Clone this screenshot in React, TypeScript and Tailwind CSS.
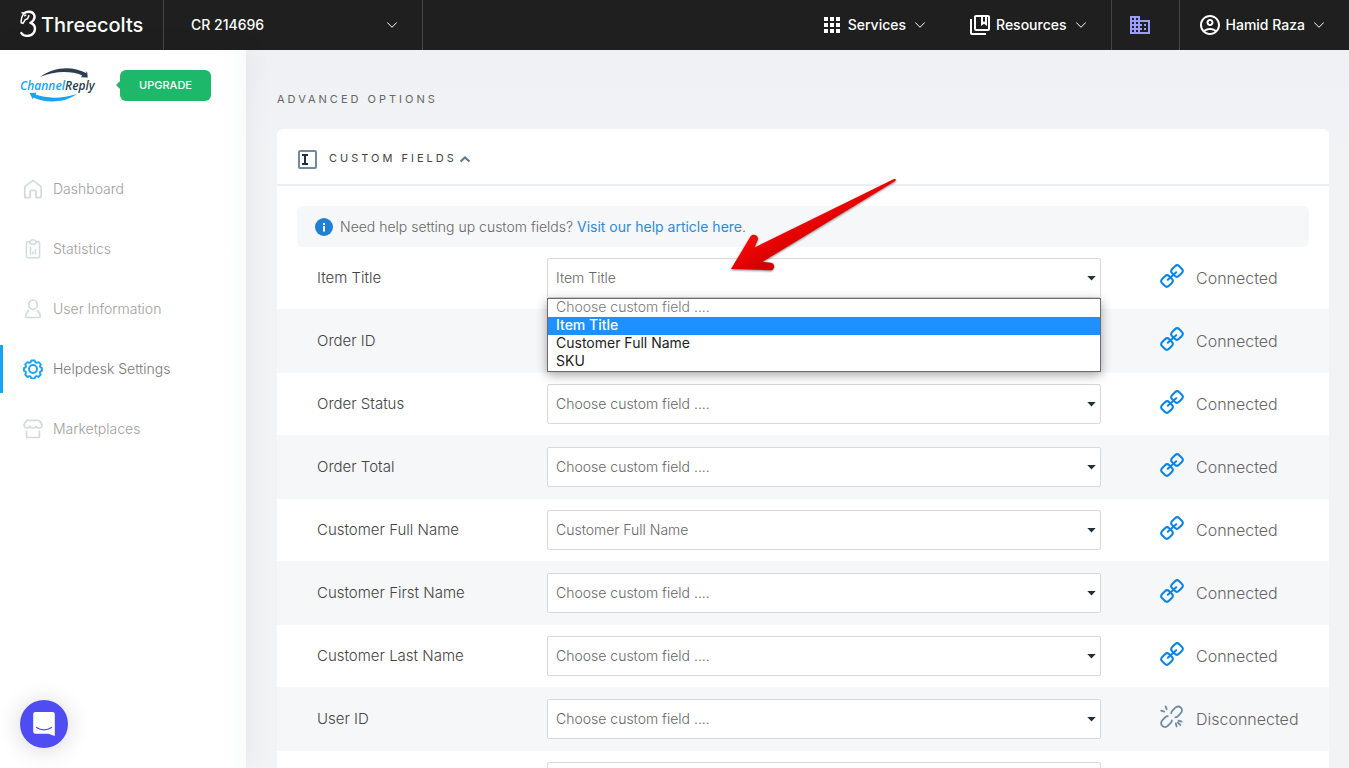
import { useState, type ReactNode } from "react";
import {
  MdApps,
  MdDomain,
  MdOutlineAccountCircle,
  MdOutlineCollectionsBookmark,
} from "react-icons/md";
import { BsChevronDown } from "react-icons/bs";

const PLACEHOLDER = "Choose custom field ....";
const OPTIONS = [PLACEHOLDER, "Item Title", "Customer Full Name", "SKU"];

type Field = { id: string; label: string; value: string; connected: boolean };

const FIELDS: Field[] = [
  { id: "item-title", label: "Item Title", value: "Item Title", connected: true },
  { id: "order-id", label: "Order ID", value: PLACEHOLDER, connected: true },
  { id: "order-status", label: "Order Status", value: PLACEHOLDER, connected: true },
  { id: "order-total", label: "Order Total", value: PLACEHOLDER, connected: true },
  { id: "full-name", label: "Customer Full Name", value: "Customer Full Name", connected: true },
  { id: "first-name", label: "Customer First Name", value: PLACEHOLDER, connected: true },
  { id: "last-name", label: "Customer Last Name", value: PLACEHOLDER, connected: true },
  { id: "user-id", label: "User ID", value: PLACEHOLDER, connected: false },
];

const NAV: { label: string; icon: ReactNode; active?: boolean }[] = [
  { label: "Dashboard", icon: <HomeIcon /> },
  { label: "Statistics", icon: <StatsIcon /> },
  { label: "User Information", icon: <UserIcon /> },
  { label: "Helpdesk Settings", icon: <GearIcon />, active: true },
  { label: "Marketplaces", icon: <ShopIcon /> },
];

function HomeIcon() {
  return (
    <svg width="20" height="20" viewBox="0 0 20 20" fill="none" stroke="currentColor" strokeWidth="1.800" strokeLinejoin="round">
      <path d="M1.800 7.600 10 1.400l8.200 6.200v10.200a.9.9 0 0 1-.9.9h-3.700a.7.7 0 0 1-.7-.7v-5.200a1.400 1.400 0 0 0-1.400-1.400h-3a1.400 1.400 0 0 0-1.400 1.400v5.200a.7.7 0 0 1-.7.700H2.700a.9.9 0 0 1-.9-.9z" />
    </svg>
  );
}

function StatsIcon() {
  return (
    <svg width="20" height="20" viewBox="0 0 20 20" fill="none" stroke="currentColor" strokeWidth="1.500" strokeLinejoin="round" strokeLinecap="round">
      <path d="M6.500 2.800H5A1.600 1.600 0 0 0 3.400 4.400v12.800A1.600 1.600 0 0 0 5 18.800h10a1.600 1.600 0 0 0 1.600-1.600V4.400A1.600 1.600 0 0 0 15 2.800h-1.500" />
      <path d="M7 2.400 8.500 1h3L13 2.400v1.400l-1.300 1.400H8.300L7 3.800z" />
      <path d="M7.500 8v7M10 13v2M12.500 10.500V15" />
    </svg>
  );
}

function UserIcon() {
  return (
    <svg width="20" height="20" viewBox="0 0 20 20" fill="none" stroke="currentColor" strokeWidth="1.700" strokeLinejoin="round">
      <ellipse cx="10" cy="5.700" rx="4.300" ry="4.700" />
      <path d="M6.200 11.300C4.300 12.300 3 14.800 2.600 17.200c-.1.700.3 1.300 1 1.300h12.800c.7 0 1.100-.6 1-1.300-.4-2.400-1.700-4.900-3.600-5.900" />
    </svg>
  );
}

function GearIcon() {
  return (
    <svg width="20" height="20" viewBox="0 0 20 20" fill="none" stroke="currentColor" strokeWidth="1.900" strokeLinejoin="round">
      <path d="M8.300 1.500h3.400l.7 1.900 1.200.5 1.900-.8 2.300 2.300-.8 1.900.4 1.100 1.500.6v2.800l-1.600.8-.4 1.200.8 1.900-2.300 2.300-1.800-.8-1.200.5-.7 1.800H8.300l-.7-1.800-1.200-.5-1.900.8-2.300-2.300.8-1.900-.4-1.200-1.600-.8V9l1.600-.6.4-1.100-.8-1.900 2.300-2.300 1.900.8 1.200-.5z" />
      <circle cx="10" cy="10" r="4" />
    </svg>
  );
}

function ShopIcon() {
  return (
    <svg width="20" height="20" viewBox="0 0 20 20" fill="none" stroke="currentColor" strokeWidth="1.700" strokeLinejoin="round">
      <path d="M4.600 1.300h10.800c2.100 1.300 3.500 3.600 3.600 5.600-.6 1.500-2 2.200-3.700 2-1 0-1.700-.7-2.200-1.600C12.500 8.500 11.300 9 10 9S7.500 8.500 6.900 7.300C6.400 8.200 5.700 8.900 4.700 8.900 3 9.100 1.600 8.400 1 6.900c.1-2 1.500-4.300 3.600-5.600z" />
      <path d="M3.600 11.500v7h12.800v-7" />
    </svg>
  );
}

function LinkIcon() {
  return (
    <svg width="24" height="24" viewBox="0 0 24 24" fill="none" stroke="#0a84e4" strokeWidth="2" strokeLinecap="round">
      <rect x="12" y="2.200" width="10" height="9.600" rx="3" transform="rotate(-45 17 7)" />
      <rect x="2" y="12.200" width="10" height="9.600" rx="3" transform="rotate(-45 7 17)" />
      <path d="M7.800 15.800 16.200 8.200" />
    </svg>
  );
}

function UnlinkIcon() {
  return (
    <svg width="24" height="24" viewBox="0 0 24 24" fill="none" stroke="#708a9f" strokeWidth="1.800" strokeLinecap="round">
      <path d="M11.200 8.200c0-1 .3-1.700 1-2.400l2.900-2.900c1.900-1.900 4.100-1.800 5.700-.2s1.700 3.800-.2 5.700l-2.900 2.900c-.7.700-1.400 1-2.400 1" />
      <path d="M7.800 11.200c-1 0-1.700.3-2.400 1l-2.900 2.900c-1.900 1.900-1.800 4.100-.2 5.700s3.800 1.700 5.700-.2l2.900-2.900c.7-.7 1-1.400 1-2.400" />
      <path d="M5.600 1.400 6.700 4.200M1.200 5.600l3 1M15.800 18.400l.9 3M18.600 15.600l3 1M17.600 17.400l2.800 2.600" />
    </svg>
  );
}

function ThreecoltsLogo() {
  return (
    <a href="#" className="flex items-center gap-1 pl-5 w-[163px] text-white">
      <svg width="17" height="30" viewBox="0 0 17 30" fill="none" stroke="currentColor" strokeLinecap="round" strokeLinejoin="round">
        <path strokeWidth="2.400" d="M4 3.400C7 .9 12.500 1.200 14 4.600c1.400 3-.4 6.200-3.600 8.300 3.600 1.200 5.200 4.200 4.200 8-1.400 5.300-10 6.800-13.200 2.200" />
        <path strokeWidth="1.500" d="M2 2.800 4 3.400C1.700 6 1 9.500 1.200 12.800l1.800.6 2.300-3.800 2.200-.8 1.400-3.200M4.600 5.800l1.200-.6" />
      </svg>
      <span className="text-xl font-medium">Threecolts</span>
    </a>
  );
}

function ChannelReplyLogo() {
  return (
    <svg width="78" height="34" viewBox="0 0 78 34" role="img" aria-label="ChannelReply">
      <path d="M20 9C33-1 52-2.500 66 5l1-1.800.8 6.300-7-.3 1.500-1.800C50 2.500 35 3 20 9z" fill="#2b3f50" />
      <path d="M57 26C45 35 26 35.500 13.500 29.500l-.7 2L9.500 25l7-.2-1 1.800C27 31 43 30.500 57 26z" fill="#1aa3f0" />
      <text x="0" y="22" fontSize="12" fontStyle="italic" fontWeight="600" fontFamily="'Open Sans', sans-serif" fill="#1aa3f0">
        Channel<tspan fill="#2b3f50">Reply</tspan>
      </text>
    </svg>
  );
}

function Header() {
  return (
    <header className="flex shrink-0 h-[50px] bg-[#1e1f1e] text-white text-sm font-medium">
      <ThreecoltsLogo />
      <button className="flex items-center justify-between w-[260px] pl-[27px] pr-6 border-x border-[#444544]">
        CR 214696
        <BsChevronDown size={12} />
      </button>
      <div className="ml-auto flex">
        <button className="flex items-center gap-1 mr-[42px]">
          <MdApps size={24} />
          Services
          <BsChevronDown size={12} className="ml-1" />
        </button>
        <button className="flex items-center gap-1 mr-6">
          <MdOutlineCollectionsBookmark size={24} />
          Resources
          <BsChevronDown size={12} className="ml-1" />
        </button>
        <button aria-label="Company" className="flex items-center w-[69px] pl-4 border-x border-[#444544] text-[#9b9cff]">
          <MdDomain size={24} />
        </button>
        <button className="flex items-center gap-1 pl-[18px] pr-6">
          <MdOutlineAccountCircle size={24} />
          Hamid Raza
          <BsChevronDown size={12} className="ml-1" />
        </button>
      </div>
    </header>
  );
}

function Sidebar() {
  return (
    <aside className="relative z-10 shrink-0 w-[246px] bg-gradient-to-r from-white from-90% to-[#fafcfb] shadow-[0_0_30px_rgba(0,0,0,0.06)]">
      <div className="flex items-start pt-[18px] pl-5">
        <ChannelReplyLogo />
        <button className="relative ml-[22px] mt-0.5 h-[31px] w-[91px] rounded-md bg-[#1eb86a] text-white text-[11px] font-medium before:absolute before:-left-1 before:top-[11px] before:border-y-4 before:border-r-4 before:border-y-transparent before:border-r-[#1eb86a] before:content-['']">
          UPGRADE
        </button>
      </div>
      <nav className="mt-[57px]">
        {NAV.map((item) => (
          <a key={item.label} href="#" className="flex items-center h-[60px]">
            <span className={item.active ? "w-[3px] h-12 bg-[#1aa3f0]" : "w-[3px]"} />
            <span className={item.active ? "ml-5 text-[#1aa3f0]" : "ml-5 text-[#d3dade]"}>{item.icon}</span>
            <span className={item.active ? "ml-2.5 text-sm font-light text-[#777]" : "ml-2.5 text-sm font-light text-[#a0a0a0]"}>
              {item.label}
            </span>
          </a>
        ))}
      </nav>
    </aside>
  );
}

function OptionList({ selected, onPick }: { selected: string; onPick: (v: string) => void }) {
  return (
    <ul role="listbox" className="absolute z-10 inset-x-0 top-full border border-[#6b6b6b] bg-white shadow-[0_3px_10px_rgba(0,0,0,0.35)]">
      {OPTIONS.map((option) => {
        const tone =
          option === selected
            ? "bg-[#1e90ff] text-white font-medium"
            : option === PLACEHOLDER
              ? "text-[#777] font-light"
              : "text-[#222]";
        return (
          <li
            key={option}
            role="option"
            aria-selected={option === selected}
            onClick={() => onPick(option)}
            className={`h-[18px] px-2 text-sm leading-4 cursor-default ${tone}`}
          >
            {option}
          </li>
        );
      })}
    </ul>
  );
}

function Arrow() {
  return (
    <svg className="absolute z-20 left-[183px] -top-20 pointer-events-none drop-shadow-[0_1px_1px_rgba(0,0,0,0.5)]" width="168" height="96" viewBox="0 0 168 96">
      <defs>
        <linearGradient id="arrow-fill" gradientUnits="userSpaceOnUse" x1="70" y1="38" x2="82" y2="62">
          <stop offset="0" stopColor="#f80606" />
          <stop offset="1" stopColor="#d40000" />
        </linearGradient>
      </defs>
      <path
        d="M1 91 20.500 58.500c2-3.200 8-1.500 7.500 2.700L24.500 69.500 164 1c1.500-.5 2.500 1 1.200 2L32.500 83.800l8.500 1c4.500.8 4 7.200-.5 7.400z"
        fill="url(#arrow-fill)"
      />
    </svg>
  );
}

function FieldRow({ field, defaultOpen }: { field: Field; defaultOpen: boolean }) {
  const [value, setValue] = useState(field.value);
  const [open, setOpen] = useState(defaultOpen);

  return (
    <div className="flex items-center pl-10 odd:py-[11px] even:py-3 even:bg-[#f6f7f9]">
      <label htmlFor={field.id} className="w-[230px] shrink-0 text-[15px] font-light text-[#444]">
        {field.label}
      </label>
      <div className="relative flex-1">
        <select
          id={field.id}
          value={value}
          onChange={(e) => setValue(e.target.value)}
          className="block w-full h-10 px-2 appearance-none rounded-xs border border-[#d6d8da] bg-white text-sm font-light text-[#666]"
        >
          {OPTIONS.map((option) => (
            <option key={option}>{option}</option>
          ))}
        </select>
        <svg className="absolute right-[5px] top-[18px] pointer-events-none" width="9" height="5" viewBox="0 0 9 5">
          <path d="M.3 0h8.400L4.500 4.500z" fill="#22303c" />
        </svg>
        {open && (
          <OptionList
            selected={value}
            onPick={(v) => {
              setValue(v);
              setOpen(false);
            }}
          />
        )}
        {defaultOpen && <Arrow />}
      </div>
      <div className="flex items-center gap-3 w-[228px] shrink-0 pl-[59px] pb-1 text-base font-light text-[#666]">
        {field.connected ? <LinkIcon /> : <UnlinkIcon />}
        <span className="pt-1">{field.connected ? "Connected" : "Disconnected"}</span>
      </div>
    </div>
  );
}

export default function App() {
  return (
    <div className="flex flex-col h-screen overflow-hidden bg-[#f1f2f4] font-['Inter',sans-serif]">
      <Header />
      <div className="flex flex-1 min-h-0">
        <Sidebar />
        <main className="flex-1 min-w-0 overflow-y-auto [scrollbar-width:none] pl-[31px] pr-5 pt-10 bg-gradient-to-b from-[#eef1f4] to-[#f2f3f5] to-15%">
          <h1 className="text-[11px] leading-[18px] tracking-[3px] text-[#666]">ADVANCED OPTIONS</h1>
          <section className="mt-[21px] rounded-md bg-white">
            <button className="flex items-center w-full h-[57px] pl-5 pt-1 border-b-2 border-[#ebeff2]">
              <svg width="20" height="20" viewBox="0 0 20 20" fill="none">
                <rect x="2" y="2" width="17" height="17" rx="1" stroke="#708a9f" strokeWidth="2" />
                <path d="M5 6h6M5 15h6M8 6v9" stroke="#22303c" strokeWidth="2" />
              </svg>
              <span className="ml-3 text-[11px] tracking-[3px] text-[#444]">CUSTOM FIELDS</span>
              <svg className="ml-0.5" width="12" height="8" viewBox="0 0 12 8" fill="none">
                <path d="M1.500 6.500 6 2.500l4.500 4" stroke="#5f7b92" strokeWidth="2.200" />
              </svg>
            </button>
            <div className="flex items-center mx-5 mt-5 h-[41px] pl-[18px] rounded-md bg-[#f6f7f9] text-sm font-light text-[#666]">
              <svg width="18" height="18" viewBox="0 0 18 18" className="mr-[7px]">
                <circle cx="9" cy="9" r="9" fill="#1f80d4" />
                <path d="M8 5h2v2H8zM8 8h2v5.500H8z" fill="#fff" />
              </svg>
              <p>
                Need help setting up custom fields?{" "}
                <a href="#" className="font-normal text-[#2f8ad8]">Visit our help article here</a>.
              </p>
            </div>
            <div>
              {FIELDS.map((field, i) => (
                <FieldRow key={field.id} field={field} defaultOpen={i === 0} />
              ))}
              {/* unassigned slot after the last field */}
              <div className="py-[11px] pl-[270px] pr-[228px]">
                <select
                  aria-label="Additional field"
                  className="block w-full h-10 px-2 appearance-none rounded-xs border border-[#d6d8da] bg-white text-sm font-light text-[#666]"
                >
                  {OPTIONS.map((option) => (
                    <option key={option}>{option}</option>
                  ))}
                </select>
              </div>
            </div>
          </section>
        </main>
      </div>
      <button
        aria-label="Open chat"
        className="fixed z-20 left-5 bottom-5 flex items-center justify-center size-12 rounded-full bg-[#4f4df2] shadow-[0_2px_24px_rgba(0,0,0,0.16)]"
      >
        <svg width="22" height="24" viewBox="0 0 22 24">
          <path d="M2.500 0h17A2.300 2.300 0 0 1 21.800 2.300V24L15.500 21.700h-13A2.300 2.300 0 0 1 .2 19.400V2.300A2.300 2.300 0 0 1 2.500 0z" fill="#fff" />
          <path d="M3.500 15.500c4.500 3 10.500 3 15 0" fill="none" stroke="#4f4df2" strokeWidth="1.300" strokeLinecap="round" />
        </svg>
      </button>
    </div>
  );
}
